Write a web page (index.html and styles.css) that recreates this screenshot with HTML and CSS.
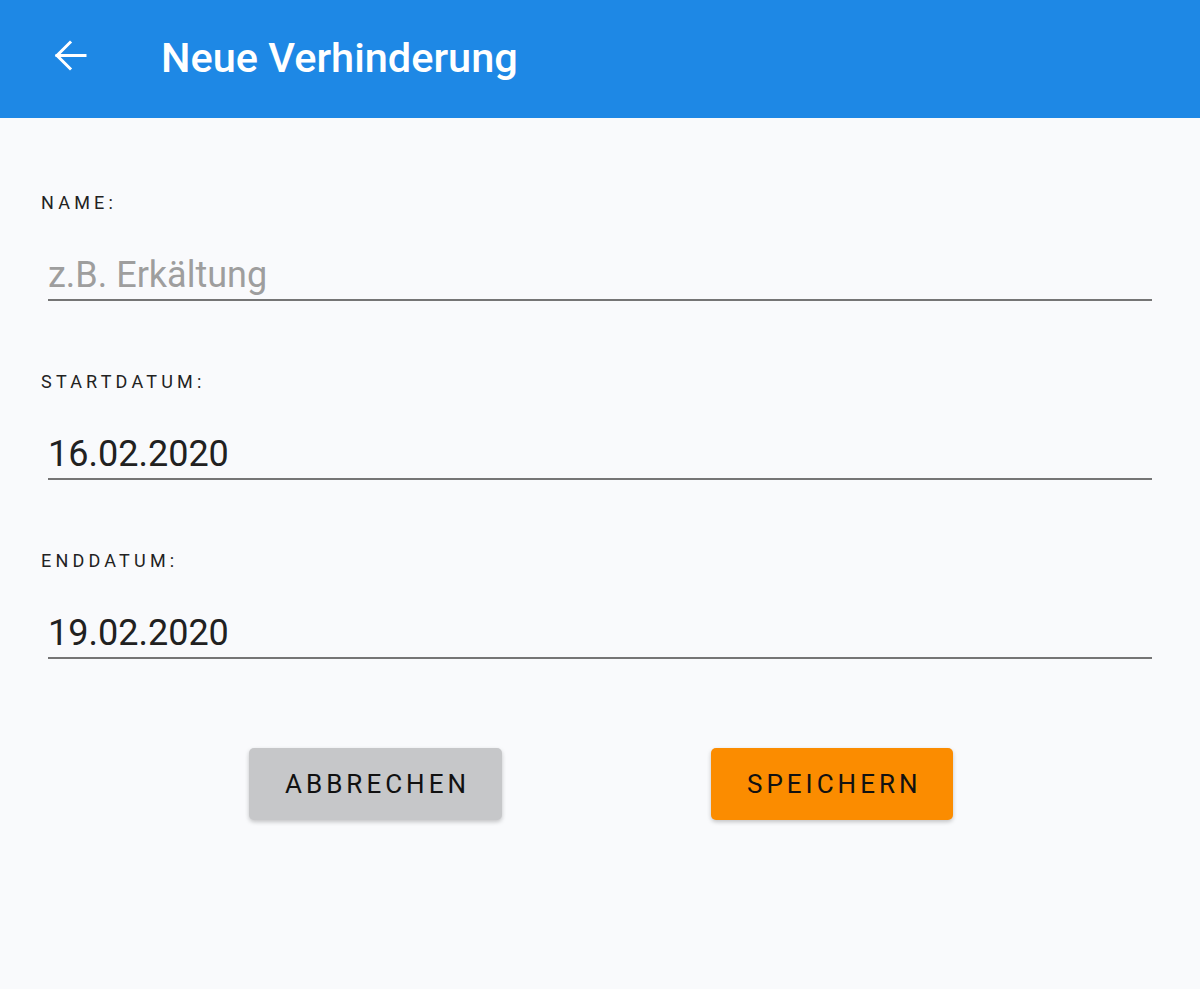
FILE: index.html
```html
<!DOCTYPE html>
<html lang="de">
<head>
<meta charset="utf-8">
<title>Neue Verhinderung</title>
<link rel="stylesheet" href="styles.css">
</head>
<body>
<header class="appbar">
  <button class="back" aria-label="Zurück">
    <svg width="34" height="34" viewBox="0 0 34 34" fill="none" stroke="#fff" stroke-width="3" stroke-linecap="square">
      <path d="M3 16.5H31"/>
      <path d="M16 3.5L3 16.5L16 29.5"/>
    </svg>
  </button>
  <h1 class="title">Neue Verhinderung</h1>
</header>
<main class="form">
  <div class="field">
    <label class="label">Name:</label>
    <div class="input placeholder">z.B. Erkältung</div>
  </div>
  <div class="field">
    <label class="label">Startdatum:</label>
    <div class="input">16.02.2020</div>
  </div>
  <div class="field">
    <label class="label">Enddatum:</label>
    <div class="input">19.02.2020</div>
  </div>
  <div class="actions">
    <button class="btn btn-cancel">Abbrechen</button>
    <button class="btn btn-save">Speichern</button>
  </div>
</main>
</body>
</html>
```

FILE: styles.css
```css
* { box-sizing: border-box; }
html, body { margin: 0; padding: 0; }
body {
  background: #f9fafc;
  font-family: Roboto, "Liberation Sans", Arial, sans-serif;
  width: 1200px;
  height: 989px;
  overflow: hidden;
}
.appbar {
  height: 118px;
  background: #1e88e5;
  display: flex;
  align-items: center;
  padding-left: 54px;
}
.back {
  background: none;
  border: 0;
  padding: 0;
  width: 34px;
  height: 34px;
  display: flex;
  margin-top: -6px;
}
.title {
  margin: 0 0 0 73px;
  color: #fff;
  font-size: 41.5px;
  font-weight: 500;
  line-height: 48px;
  margin-top: -2px;
}
.form {
  padding: 75px 48px 0 48px;
}
.field {
  margin-bottom: 71px;
}
.label {
  display: block;
  margin-left: -7px;
  font-size: 18px;
  line-height: 20px;
  letter-spacing: 4.2px;
  text-transform: uppercase;
  color: #222;
}
.input {
  margin-top: 40px;
  font-size: 36px;
  line-height: 44px;
  padding-bottom: 2px;
  border-bottom: 2px solid #757575;
  color: #212121;
}
.placeholder { color: #9e9e9e; }
.actions {
  display: flex;
  margin-top: 89px;
  padding-left: 201px;
  gap: 209px;
}
.btn {
  height: 72px;
  border: 0;
  border-radius: 5px;
  padding: 0 32px 0 36px;
  font-family: Roboto, "Liberation Sans", Arial, sans-serif;
  font-size: 26px;
  font-weight: 400;
  letter-spacing: 4px;
  text-transform: uppercase;
  color: #111;
  box-shadow: 0 2px 4px rgba(0,0,0,0.22);
}
.btn-cancel { background: #c6c7c9; }
.btn-save { background: #fb8c00; }
```
